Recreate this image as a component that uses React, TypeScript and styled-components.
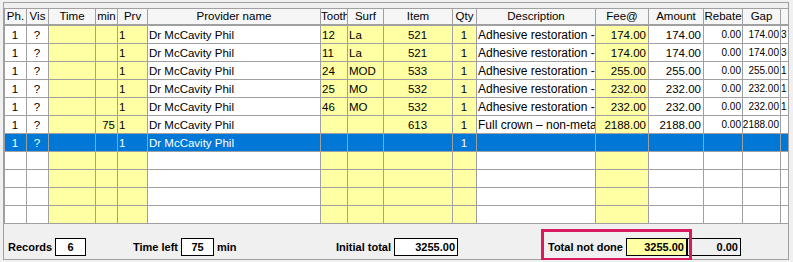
import React from "react";
import styled, { createGlobalStyle, css } from "styled-components";

type Align = "left" | "center" | "right";

type Row = {
  ph: string;
  vis: string;
  time: string;
  min: string;
  prv: string;
  name: string;
  tooth: string;
  surf: string;
  item: string;
  qty: string;
  desc: string;
  fee: string;
  amount: string;
  rebate: string;
  gap: string;
  extra: string;
};

type Column = {
  key: keyof Row;
  title: string;
  width: number;
  align: Align;
  yellow?: boolean;
  size?: number;
};

const columns: Column[] = [
  { key: "ph", title: "Ph.", width: 22, align: "center" },
  { key: "vis", title: "Vis", width: 22, align: "center" },
  { key: "time", title: "Time", width: 47, align: "left", yellow: true },
  { key: "min", title: "min", width: 22, align: "right", yellow: true },
  { key: "prv", title: "Prv", width: 30, align: "left", yellow: true },
  { key: "name", title: "Provider name", width: 173, align: "left" },
  { key: "tooth", title: "Tooth", width: 27, align: "left", yellow: true },
  { key: "surf", title: "Surf", width: 36, align: "left", yellow: true },
  { key: "item", title: "Item", width: 69, align: "center", yellow: true },
  { key: "qty", title: "Qty", width: 24, align: "center", yellow: true },
  { key: "desc", title: "Description", width: 119, align: "left", size: 12 },
  { key: "fee", title: "Fee@", width: 53, align: "right", yellow: true },
  { key: "amount", title: "Amount", width: 55, align: "right" },
  { key: "rebate", title: "Rebate", width: 39, align: "right", size: 10 },
  { key: "gap", title: "Gap", width: 38, align: "right", size: 10 },
  { key: "extra", title: "", width: 7, align: "left", size: 10 },
];

const line = (
  tooth: string,
  surf: string,
  item: string,
  desc: string,
  fee: string,
  extra: string,
  min = ""
): Row => ({
  ph: "1",
  vis: "?",
  time: "",
  min,
  prv: "1",
  name: "Dr McCavity Phil",
  tooth,
  surf,
  item,
  qty: "1",
  desc,
  fee,
  amount: fee,
  rebate: "0.00",
  gap: fee,
  extra,
});

const anterior = "Adhesive restoration - anterior tooth";
const posterior = "Adhesive restoration - posterior tooth";

const rows: Row[] = [
  line("12", "La", "521", anterior, "174.00", "3"),
  line("11", "La", "521", anterior, "174.00", "3"),
  line("24", "MOD", "533", posterior, "255.00", "1"),
  line("25", "MO", "532", posterior, "232.00", "1"),
  line("46", "MO", "532", posterior, "232.00", "1"),
  line("", "", "613", "Full crown \u2013 non-metallic", "2188.00", "", "75"),
];

const emptyRow = Object.fromEntries(columns.map((c) => [c.key, ""])) as Row;

const selectedRow: Row = {
  ...emptyRow,
  ph: "1",
  vis: "?",
  prv: "1",
  name: "Dr McCavity Phil",
  qty: "1",
};

const App = () => (
  <>
    <GlobalStyle />
    <Panel>
      <Grid>
        {columns.map((c) => (
          <HeaderCell key={c.key} $last={c.key === "extra"}>
            {c.title}
          </HeaderCell>
        ))}
        {[...rows, selectedRow, emptyRow, emptyRow, emptyRow, emptyRow].map((r, i) =>
          columns.map((c) => (
            <Cell
              key={`${i}-${c.key}`}
              $align={c.align}
              $yellow={!!c.yellow}
              $size={c.size ?? 11.5}
              $selected={i === rows.length}
              $last={c.key === "extra"}
            >
              {r[c.key]}
            </Cell>
          ))
        )}
      </Grid>
      <Footer>
        <Group>
          <Label>Records</Label>
          <Box $width={31} $align="center">6</Box>
        </Group>
        <Group>
          <Label>Time left</Label>
          <Box $width={33} $align="center">75</Box>
          <Label>min</Label>
        </Group>
        <Group>
          <Label>Initial total</Label>
          <Box $width={64} $align="right">3255.00</Box>
        </Group>
        <Group>
          <Highlighted>
            <Label>Total not done</Label>
            <Box $width={61} $align="right" $yellow>
              3255.00
            </Box>
            <Highlight />
          </Highlighted>
          <Box $width={54} $align="right" $plain>
            0.00
          </Box>
        </Group>
      </Footer>
    </Panel>
  </>
);

export default App;

const GlobalStyle = createGlobalStyle`
  html, body {
    margin: 0;
    padding: 0;
    background: #f0f0f0;
  }
  body {
    font-family: "Liberation Sans", Arial, sans-serif;
    color: #000;
  }
`;

const Panel = styled.div`
  margin: 2px 4px 0 3px;
  border: 1px solid #a0a0a0;
  padding-top: 5px;
  background: #f0f0f0;
`;

const Grid = styled.div`
  display: grid;
  grid-template-columns: ${columns.map((c) => `${c.width}px`).join(" ")};
  border-top: 1px solid #a0a0a0;
  border-left: 1px solid #a0a0a0;
`;

const HeaderCell = styled.div<{ $last: boolean }>`
  box-sizing: border-box;
  height: 17px;
  line-height: 15px;
  font-size: 11.5px;
  text-align: center;
  white-space: nowrap;
  overflow: hidden;
  background: #f6f6f6;
  border-bottom: 2px solid #a0a0a0;
  border-right: ${(p) => (p.$last ? "none" : "1px solid #a0a0a0")};
`;

const justify = { left: "flex-start", center: "center", right: "flex-end" };

const Cell = styled.div<{
  $align: Align;
  $yellow: boolean;
  $size: number;
  $selected: boolean;
  $last: boolean;
}>`
  box-sizing: border-box;
  height: 18px;
  display: flex;
  align-items: center;
  justify-content: ${(p) => justify[p.$align]};
  padding: ${(p) => (p.$size < 11 ? "0 1px 0 0" : "0 2px 0 1px")};
  font-size: ${(p) => p.$size}px;
  white-space: nowrap;
  overflow: hidden;
  background: ${(p) => (p.$yellow ? "#ffffa4" : "#ffffff")};
  border-bottom: 1px solid #a0a0a0;
  border-right: ${(p) => (p.$last ? "none" : "1px solid #a0a0a0")};

  ${(p) =>
    p.$selected &&
    css`
      background: #0078d7;
      color: #ffffff;
    `}
`;

const Footer = styled.div`
  display: grid;
  grid-template-columns: 125px 203px 212px auto;
  align-items: end;
  height: 35px;
  box-sizing: border-box;
  padding: 0 0 3px 4px;
`;

const Group = styled.div`
  display: flex;
  align-items: center;
  gap: 3px;
`;

const Highlighted = styled.div`
  position: relative;
  display: flex;
  align-items: center;
  gap: 3px;
`;

const Highlight = styled.div`
  position: absolute;
  left: -7px;
  right: -5px;
  top: -9px;
  bottom: -5px;
  border: 3px solid #d81b60;
  pointer-events: none;
`;

const Label = styled.span`
  font-size: 11px;
  font-weight: bold;
  line-height: 17px;
`;

const Box = styled.div<{ $width: number; $align: Align; $yellow?: boolean; $plain?: boolean }>`
  box-sizing: border-box;
  width: ${(p) => p.$width}px;
  height: 18px;
  line-height: 16px;
  border: 1px solid #000;
  padding: 0 2px;
  font-size: 11px;
  font-weight: bold;
  text-align: ${(p) => p.$align};
  background: ${(p) => (p.$yellow ? "#ffffa4" : p.$plain ? "#f0f0f0" : "#ffffff")};
  margin-left: ${(p) => (p.$plain ? "-3px" : "0")};
`;
